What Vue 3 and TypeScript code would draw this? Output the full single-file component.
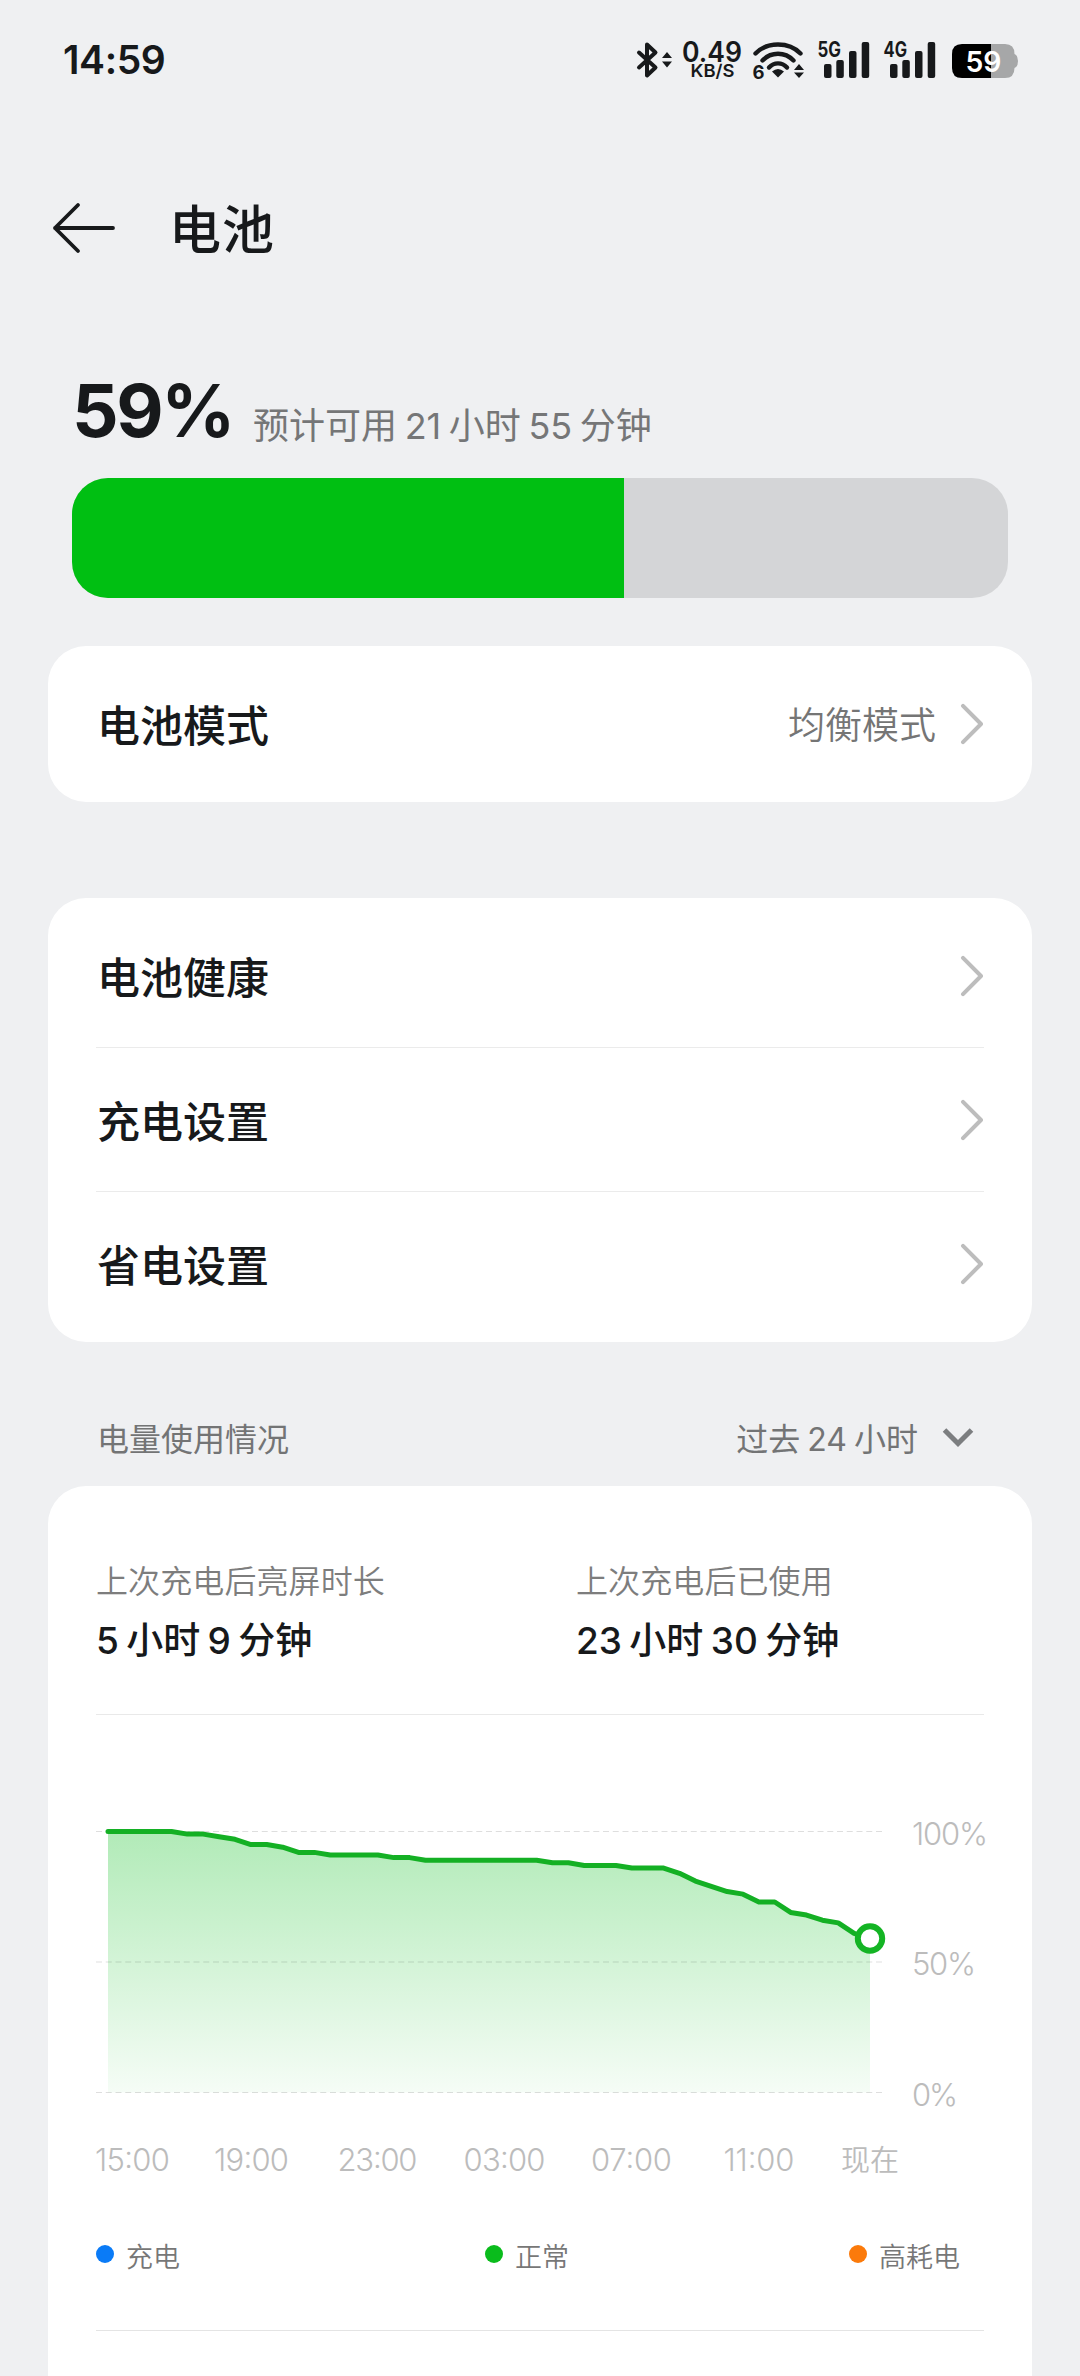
<script setup lang="ts">
interface SettingRow {
  label: string
  value?: string
}

interface AxisTick {
  label: string
  x: number
  width: number
}

const level = 59
const modeRows: SettingRow[] = [{ label: '电池模式', value: '均衡模式' }]
const settingRows: SettingRow[] = [
  { label: '电池健康' },
  { label: '充电设置' },
  { label: '省电设置' },
]
const groups: SettingRow[][] = [modeRows, settingRows]

const stats = [
  { label: '上次充电后亮屏时长', value: '5 小时 9 分钟' },
  { label: '上次充电后已使用', value: '23 小时 30 分钟' },
]

// One sample every half hour, in percent
const samples: number[] = [
  100, 100, 100, 100, 100, 99, 99, 98, 97, 95, 95, 94, 92, 92, 91, 91, 91, 91, 90, 90,
  89, 89, 89, 89, 89, 89, 89, 89, 88, 88, 87, 87, 87, 86, 86, 86, 84, 81, 79, 77,
  76, 73, 73, 69, 68, 66, 65, 61, 59,
]
const x0 = 12
const step = 762 / (samples.length - 1)
const top = 21.5
const bottom = 282.5
const px = (i: number): number => +(x0 + i * step).toFixed(2)
const py = (v: number): number => +(bottom - ((bottom - top) * v) / 100).toFixed(2)

const linePoints = samples.map((v, i) => `${px(i)},${py(v)}`).join(' ')
const areaPoints = `${px(0)},${bottom} ${linePoints} ${px(samples.length - 1)},${bottom}`
const endX = px(samples.length - 1)
const endY = py(samples[samples.length - 1])

const gridLines = [
  { value: 100, width: 76 },
  { value: 50, width: 64 },
  { value: 0, width: 46 },
]
const ticks: AxisTick[] = [
  { label: '15:00', x: 36.5, width: 75 },
  { label: '19:00', x: 155.5, width: 75 },
  { label: '23:00', x: 281.5, width: 80 },
  { label: '03:00', x: 408.5, width: 82 },
  { label: '07:00', x: 535.5, width: 81 },
  { label: '11:00', x: 663, width: 71 },
]

const legend = [
  { label: '充电', color: '#0a7bf7' },
  { label: '正常', color: '#0abc1c' },
  { label: '高耗电', color: '#fb7a0b' },
]
</script>

<template>
  <div class="screen">
    <header class="status">
      <span class="clock">14:59</span>
      <svg class="status-icons" width="390" height="64" viewBox="632 28 390 64">
        <g fill="none" stroke="#17191b" stroke-width="4" stroke-linejoin="round" stroke-linecap="round">
          <path d="M639 52.500 L655.500 67.500 L647 75.500 V44.500 L655.500 52.500 L639 67.500" />
        </g>
        <path d="M667 52 L672 58 H662 Z M667 67.500 L672 61.500 H662 Z" fill="#17191b" />
        <text class="st" x="712" y="62" text-anchor="middle" font-size="28" font-weight="600" textLength="60" lengthAdjust="spacingAndGlyphs">0.49</text>
        <text class="st" x="712.500" y="76.800" text-anchor="middle" font-size="17.500" font-weight="600" textLength="44" lengthAdjust="spacingAndGlyphs">KB/S</text>
        <g fill="none" stroke="#17191b" stroke-width="4.400" stroke-linecap="round">
          <path d="M755.500 53.500 C767 41.500 789 41.500 800.500 53.500" />
          <path d="M762.500 60.500 C771 51.500 785 51.500 793.500 60.500" />
          <path d="M769 67.500 C774 62 782 62 787 67.500" />
        </g>
        <path d="M778 77.500 L772 71.500 Q778 66.500 784 71.500 Z" fill="#17191b" />
        <text class="st" x="752.500" y="79" font-size="18.500" font-weight="700">6</text>
        <path d="M799 64 L804 70 H794 Z M799 78 L804 72.500 H794 Z" fill="#17191b" />
        <g fill="#17191b">
          <text class="st" x="817.500" y="56.800" font-size="21" font-weight="700" textLength="23.500" lengthAdjust="spacingAndGlyphs">5G</text>
          <rect x="824" y="64" width="7.500" height="14" rx="2" />
          <rect x="836.300" y="60" width="7.500" height="18" rx="2" />
          <rect x="849" y="51" width="7.500" height="27" rx="2" />
          <rect x="861.700" y="42" width="7.500" height="36" rx="2" />
          <text class="st" x="883.500" y="56.800" font-size="21" font-weight="700" textLength="23.500" lengthAdjust="spacingAndGlyphs">4G</text>
          <rect x="890" y="64" width="7.500" height="14" rx="2" />
          <rect x="902.300" y="60" width="7.500" height="18" rx="2" />
          <rect x="915" y="51" width="7.500" height="27" rx="2" />
          <rect x="927.700" y="42" width="7.500" height="36" rx="2" />
        </g>
        <path d="M991 44 H1005 Q1014.500 44 1014.500 54 Q1018 55.500 1018 61 Q1018 66.500 1014.500 68 Q1014.500 78 1005 78 H991 Z" fill="#a6a7a8" />
        <path d="M991 44 H962 Q952 44 952 54 V68 Q952 78 962 78 H991 Z" fill="#000" />
        <text x="983.500" y="72" text-anchor="middle" font-size="29" font-weight="600" fill="#fff" textLength="36" lengthAdjust="spacingAndGlyphs">59</text>
      </svg>
    </header>

    <div class="titlebar">
      <svg class="back" width="64" height="52" viewBox="0 0 64 52" fill="none" stroke="#17191b" stroke-width="3.800" stroke-linecap="round" stroke-linejoin="round">
        <path d="M27 3 L4 26 L27 49 M4 26 H62" />
      </svg>
      <h1>电池</h1>
    </div>

    <section class="hero">
      <div class="hero-text">
        <span class="percent">{{ level }}%</span>
        <span class="estimate">预计可用 21 小时 55 分钟</span>
      </div>
      <div class="gauge"><div class="gauge-fill" :style="{ width: level + '%' }"></div></div>
    </section>

    <section v-for="(rows, g) in groups" :key="g" class="card list">
      <div v-for="row in rows" :key="row.label" class="row">
        <span class="row-label">{{ row.label }}</span>
        <span v-if="row.value" class="row-value">{{ row.value }}</span>
        <svg class="chevron" width="24" height="42" viewBox="0 0 24 42" fill="none" stroke="#bdbdbd" stroke-width="4" stroke-linecap="round" stroke-linejoin="round">
          <path d="M3 2.800 L21 21 L3 39.200" />
        </svg>
      </div>
    </section>

    <div class="section-head">
      <span class="section-title">电量使用情况</span>
      <span class="range">过去 24 小时</span>
      <svg class="caret" width="32" height="22" viewBox="0 0 32 22" fill="none" stroke="#7c7e80" stroke-width="5">
        <path d="M2.500 3 L16 16.500 L29.500 3" />
      </svg>
    </div>

    <section class="card usage">
      <div class="stats">
        <div v-for="s in stats" :key="s.label" class="stat">
          <span class="stat-label">{{ s.label }}</span>
          <span class="stat-value">{{ s.value }}</span>
        </div>
      </div>

      <svg class="chart" width="900" height="380" viewBox="0 0 900 380">
        <defs>
          <linearGradient id="area" x1="0" y1="0" x2="0" y2="1">
            <stop offset="0" stop-color="#0cbf20" stop-opacity="0.32" />
            <stop offset="1" stop-color="#0cbf20" stop-opacity="0.04" />
          </linearGradient>
        </defs>
        <polygon :points="areaPoints" fill="url(#area)" />
        <g v-for="g in gridLines" :key="g.value">
          <line x1="0" x2="786" :y1="py(g.value)" :y2="py(g.value)" stroke="#000" stroke-opacity="0.13" stroke-width="1" stroke-dasharray="6 3.750" />
          <text class="axis" x="816" :y="py(g.value) + 13" :textLength="g.width">{{ g.value }}%</text>
        </g>
        <polyline :points="linePoints" fill="none" stroke="#14b024" stroke-width="5" stroke-linejoin="round" stroke-linecap="round" />
        <circle :cx="endX" :cy="endY" r="12.200" fill="#fff" stroke="#14b424" stroke-width="6" />
        <text v-for="t in ticks" :key="t.label" class="axis" :x="t.x" y="360.500" text-anchor="middle" :textLength="t.width">{{ t.label }}</text>
        <text class="axis now" x="774" y="360.500" text-anchor="middle">现在</text>
      </svg>

      <div class="legend">
        <span v-for="l in legend" :key="l.label" class="legend-item">
          <i class="dot" :style="{ background: l.color }"></i>
          <span class="legend-label">{{ l.label }}</span>
        </span>
      </div>
    </section>
  </div>
</template>

<style>
body {
  background: #eff0f2;
}
</style>

<style scoped>
.screen {
  box-sizing: border-box;
  width: 1080px;
  height: 2376px;
  overflow: hidden;
  background: #eff0f2;
  color: #17191b;
  font-family: Inter, "Noto Sans CJK SC", sans-serif;
  display: flex;
  flex-direction: column;
}
.status {
  display: flex;
  justify-content: space-between;
  align-items: center;
  height: 120px;
  padding: 0 58px 0 63px;
  flex: none;
}
.clock {
  font-size: 39px;
  font-weight: 600;
  line-height: 50px;
  letter-spacing: -0.4px;
}
.status-icons {
  display: block;
}
.st {
  fill: #17191b;
}
.titlebar {
  display: flex;
  align-items: center;
  gap: 54px;
  height: 216px;
  padding: 0 51px;
  flex: none;
}
.titlebar h1 {
  margin: 0;
  padding-top: 5px;
  font-size: 52px;
  font-weight: 500;
  line-height: 70px;
  letter-spacing: 1px;
}
.hero {
  padding: 36px 72px 0;
  height: 310px;
  box-sizing: border-box;
  flex: none;
}
.hero-text {
  display: flex;
  align-items: baseline;
  height: 106px;
}
.percent {
  width: 181px;
  padding-top: 1px;
  font-size: 73px;
  line-height: 76px;
  font-weight: 700;
  letter-spacing: -2.4px;
}
.estimate {
  padding-top: 3px;
  transform: translateY(2px);
  font-size: 36px;
  line-height: 40px;
  word-spacing: -2.5px;
  color: #757677;
}
.gauge {
  height: 120px;
  border-radius: 36px;
  background: #d4d5d7;
  overflow: hidden;
}
.gauge-fill {
  height: 100%;
  background: #00bf12;
}
.card {
  margin: 0 48px;
  border-radius: 38px;
  background: #fff;
  flex: none;
}
.list {
  padding: 6px 48px;
}
.list + .list {
  margin-top: 96px;
}
.row {
  display: flex;
  align-items: center;
  height: 144px;
}
.row + .row {
  box-shadow: 0 -1px 0 #ebebeb;
}
.row-label {
  flex: 1;
  padding: 4px 0 0 1px;
  font-size: 43px;
  font-weight: 500;
  line-height: 60px;
}
.row-value {
  margin-right: 24px;
  padding-top: 3px;
  font-size: 37px;
  font-weight: 350;
  line-height: 54px;
  color: #757575;
}
.section-head {
  display: flex;
  align-items: center;
  height: 48px;
  padding: 72px 106px 24px 97px;
  color: #737475;
  font-size: 32px;
  line-height: 48px;
  flex: none;
}
.section-title {
  flex: 1;
  padding-top: 4px;
}
.range {
  margin-right: 24px;
  padding-top: 4px;
  word-spacing: -2px;
}
.usage {
  box-sizing: border-box;
  height: 930px;
  padding: 0 48px;
}
.stats {
  display: grid;
  grid-template-columns: 480px 1fr;
  height: 229px;
  box-sizing: border-box;
  padding-top: 72px;
  border-bottom: 1px solid #e9e9e9;
}
.stat {
  display: flex;
  flex-direction: column;
}
.stat-label {
  font-size: 32px;
  font-weight: 350;
  line-height: 48px;
  letter-spacing: 0.1px;
  color: #7d7d7d;
}
.stat-value {
  margin-top: 8px;
  font-size: 37px;
  font-weight: 500;
  line-height: 54px;
  word-spacing: -2.5px;
}
.chart {
  display: block;
  margin-top: 95px;
  overflow: visible;
}
.axis {
  font-size: 31px;
  font-weight: 350;
  fill: #bcbcbc;
}
.now {
  font-size: 29px;
}
.legend {
  display: grid;
  grid-template-columns: 389px 364px 1fr;
  align-items: center;
  height: 141px;
  padding-bottom: 12px;
  box-sizing: border-box;
  border-bottom: 1px solid #e4e4e4;
  color: #777;
  font-size: 27px;
  font-weight: 350;
}
.legend-item {
  display: flex;
  align-items: center;
}
.legend-label {
  padding-top: 2px;
}
.dot {
  width: 18px;
  height: 18px;
  margin-right: 12px;
  border-radius: 50%;
}
</style>
